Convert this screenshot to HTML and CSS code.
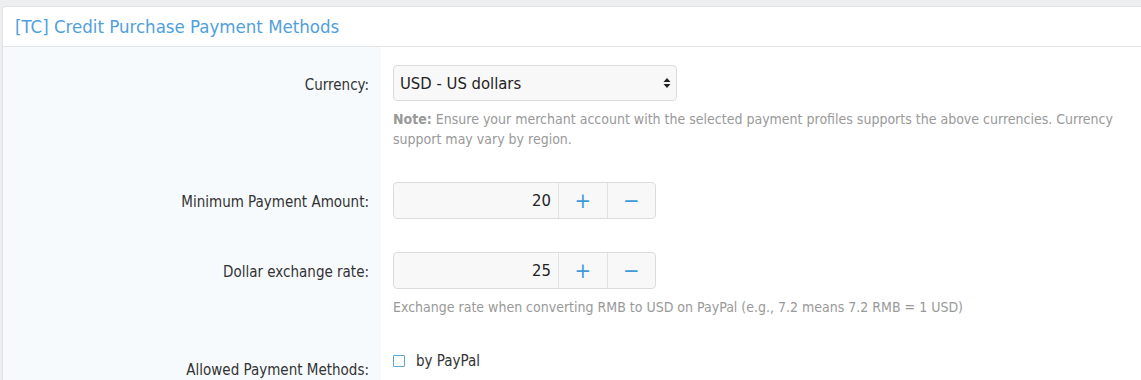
FILE: index.html
```html
<!DOCTYPE html>
<html lang="en">
<head>
    <meta charset="UTF-8">
    <meta name="viewport" content="width=device-width, initial-scale=1.0">
    <title>Credit Purchase Payment Methods</title>
    <link rel="stylesheet" href="styles.css">
</head>
<body>
    <div class="panel">
        <div class="panel-heading">
            <h3>[TC] Credit Purchase Payment Methods</h3>
        </div>
        <div class="panel-body">
            <div class="form-row">
                <label class="row-label" for="currency">Currency:</label>
                <div class="row-field">
                    <div class="select-wrap">
                        <select id="currency" name="currency">
                            <option value="USD">USD - US dollars</option>
                            <option value="CNY">CNY - Chinese yuan</option>
                        </select>
                        <svg class="select-arrow" width="8" height="12" viewBox="0 0 8 12">
                            <path d="M4 1 L7.5 5 L0.5 5 Z M4 11 L7.5 7 L0.5 7 Z" fill="#222"/>
                        </svg>
                    </div>
                    <p class="help"><b>Note:</b> Ensure your merchant account with the selected payment profiles supports the above currencies. Currency support may vary by region.</p>
                </div>
            </div>
            <div class="form-row">
                <label class="row-label" for="min_amount">Minimum Payment Amount:</label>
                <div class="row-field">
                    <div class="spinner">
                        <input type="text" id="min_amount" name="min_amount" value="20">
                        <button type="button" class="spin-btn">+</button>
                        <button type="button" class="spin-btn">&minus;</button>
                    </div>
                </div>
            </div>
            <div class="form-row">
                <label class="row-label" for="rate">Dollar exchange rate:</label>
                <div class="row-field">
                    <div class="spinner">
                        <input type="text" id="rate" name="rate" value="25">
                        <button type="button" class="spin-btn">+</button>
                        <button type="button" class="spin-btn">&minus;</button>
                    </div>
                    <p class="help">Exchange rate when converting RMB to USD on PayPal (e.g., 7.2 means 7.2 RMB = 1 USD)</p>
                </div>
            </div>
            <div class="form-row">
                <label class="row-label">Allowed Payment Methods:</label>
                <div class="row-field">
                    <label class="check"><span class="check-box"></span>by PayPal</label>
                </div>
            </div>
        </div>
    </div>
</body>
</html>
```

FILE: styles.css
```css
html, body {
    height: 100%;
}
body {
    margin: 0;
    padding: 6px 0 0 2px;
    box-sizing: border-box;
    background-color: #eceeef;
    font-family: "DejaVu Sans Condensed", "DejaVu Sans", sans-serif;
    font-stretch: condensed;
    font-size: 14px;
    color: #333;
    overflow: hidden;
}
.panel {
    display: flex;
    flex-direction: column;
    height: 100%;
    box-sizing: border-box;
    background-color: #fff;
    border: 1px solid #e0e2e3;
    border-right: none;
    border-bottom: none;
    border-top-left-radius: 4px;
    overflow: hidden;
}
.panel-heading {
    flex: none;
    height: 39px;
    padding: 0 12px;
    border-bottom: 1px solid #e3e5e6;
    display: flex;
    align-items: center;
}
.panel-heading h3 {
    margin: 0;
    font-size: 18.5px;
    font-weight: normal;
    color: #4f9fdc;
}
.panel-body {
    flex: 1;
    background: linear-gradient(to right, #f6fafd 378px, #fff 378px);
}
.form-row {
    display: flex;
    padding-top: 18px;
    padding-bottom: 15px;
}
.row-label {
    width: 366px;
    padding-right: 12px;
    padding-top: 10px;
    line-height: 20px;
    text-align: right;
    font-size: 15px;
    color: #333;
}
.row-field {
    padding-left: 12px;
}
.select-wrap {
    position: relative;
    width: 284px;
}
.select-wrap select {
    appearance: none;
    width: 100%;
    height: 36px;
    padding: 0 6px;
    border: 1px solid #dcdcdc;
    border-radius: 4px;
    background-color: #f8f8f8;
    font-family: inherit;
    font-stretch: condensed;
    font-size: 16.5px;
    color: #222;
}
.select-arrow {
    position: absolute;
    right: 6px;
    top: 12px;
}
.help {
    margin: 8px 0 0;
    line-height: 20px;
    color: #999;
    font-size: 14px;
    max-width: 725px;
}
.help b {
    color: #999;
}
.spinner {
    display: flex;
    width: 263px;
    height: 37px;
    border: 1px solid #dcdcdc;
    border-radius: 4px;
    background-color: #f8f8f8;
    box-sizing: border-box;
    overflow: hidden;
}
.spinner input {
    width: 164px;
    border: none;
    background: transparent;
    text-align: right;
    padding: 0 7px 0 0;
    font-family: inherit;
    font-stretch: condensed;
    font-size: 16.5px;
    color: #222;
    box-sizing: border-box;
}
.spin-btn {
    width: 49px;
    border: none;
    border-left: 1px solid #e2e2e2;
    background: transparent;
    color: #3d9ad9;
    font-size: 22px;
    font-family: inherit;
    padding: 0;
    cursor: pointer;
}
.check {
    display: flex;
    align-items: center;
    padding-top: 1px;
    line-height: 20px;
    font-size: 15px;
    color: #333;
}
.check-box {
    width: 10px;
    height: 10px;
    border: 1.5px solid #5aa7dc;
    border-radius: 1px;
    margin-right: 11px;
    background: #fff;
}
```
